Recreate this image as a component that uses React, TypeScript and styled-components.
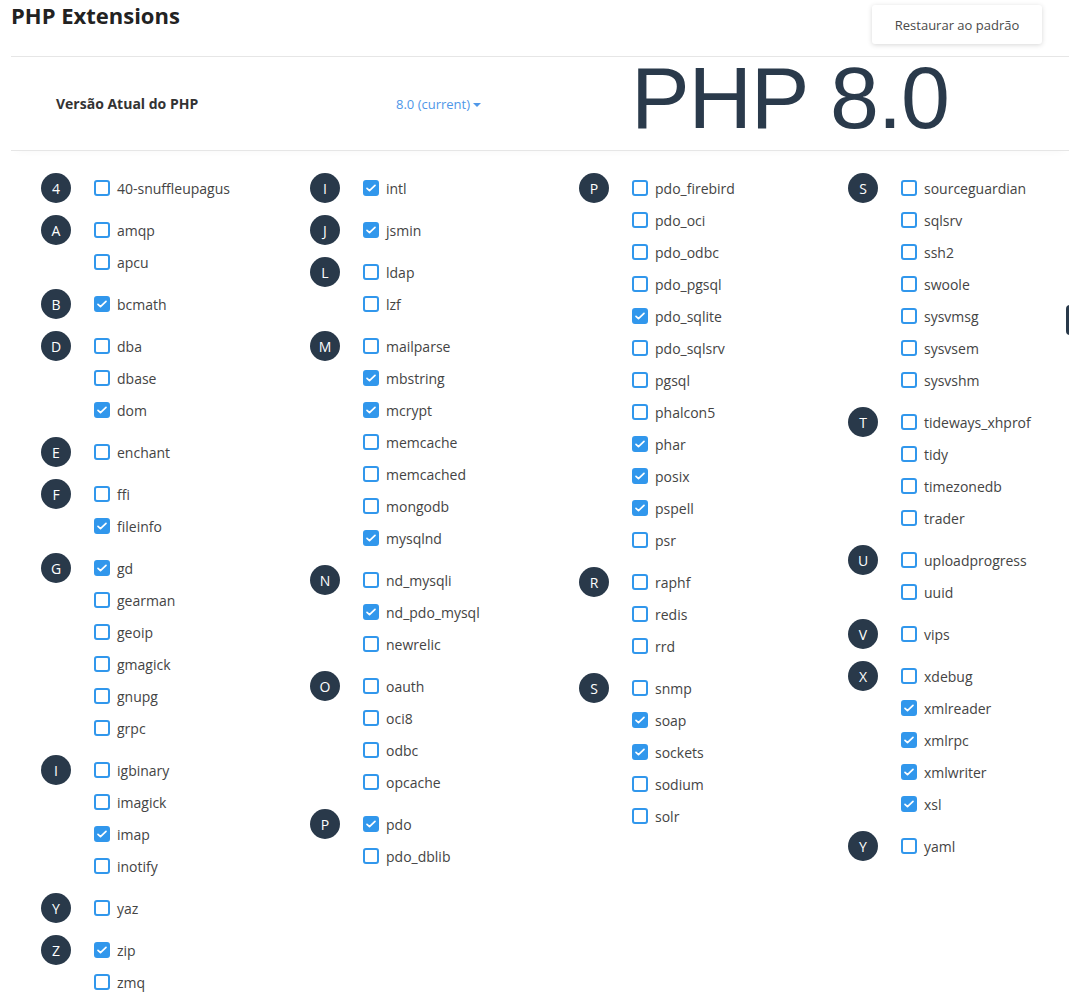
import styled, { createGlobalStyle } from "styled-components";

type Group = { letter: string; items: [string, boolean][] };

const columns: Group[][] = [
  [
    { letter: "4", items: [["40-snuffleupagus", false]] },
    { letter: "A", items: [["amqp", false], ["apcu", false]] },
    { letter: "B", items: [["bcmath", true]] },
    { letter: "D", items: [["dba", false], ["dbase", false], ["dom", true]] },
    { letter: "E", items: [["enchant", false]] },
    { letter: "F", items: [["ffi", false], ["fileinfo", true]] },
    {
      letter: "G",
      items: [["gd", true], ["gearman", false], ["geoip", false], ["gmagick", false], ["gnupg", false], ["grpc", false]],
    },
    { letter: "I", items: [["igbinary", false], ["imagick", false], ["imap", true], ["inotify", false]] },
    { letter: "Y", items: [["yaz", false]] },
    { letter: "Z", items: [["zip", true], ["zmq", false]] },
  ],
  [
    { letter: "I", items: [["intl", true]] },
    { letter: "J", items: [["jsmin", true]] },
    { letter: "L", items: [["ldap", false], ["lzf", false]] },
    {
      letter: "M",
      items: [
        ["mailparse", false],
        ["mbstring", true],
        ["mcrypt", true],
        ["memcache", false],
        ["memcached", false],
        ["mongodb", false],
        ["mysqlnd", true],
      ],
    },
    { letter: "N", items: [["nd_mysqli", false], ["nd_pdo_mysql", true], ["newrelic", false]] },
    { letter: "O", items: [["oauth", false], ["oci8", false], ["odbc", false], ["opcache", false]] },
    { letter: "P", items: [["pdo", true], ["pdo_dblib", false]] },
  ],
  [
    {
      letter: "P",
      items: [
        ["pdo_firebird", false],
        ["pdo_oci", false],
        ["pdo_odbc", false],
        ["pdo_pgsql", false],
        ["pdo_sqlite", true],
        ["pdo_sqlsrv", false],
        ["pgsql", false],
        ["phalcon5", false],
        ["phar", true],
        ["posix", true],
        ["pspell", true],
        ["psr", false],
      ],
    },
    { letter: "R", items: [["raphf", false], ["redis", false], ["rrd", false]] },
    {
      letter: "S",
      items: [["snmp", false], ["soap", true], ["sockets", true], ["sodium", false], ["solr", false]],
    },
  ],
  [
    {
      letter: "S",
      items: [
        ["sourceguardian", false],
        ["sqlsrv", false],
        ["ssh2", false],
        ["swoole", false],
        ["sysvmsg", false],
        ["sysvsem", false],
        ["sysvshm", false],
      ],
    },
    { letter: "T", items: [["tideways_xhprof", false], ["tidy", false], ["timezonedb", false], ["trader", false]] },
    { letter: "U", items: [["uploadprogress", false], ["uuid", false]] },
    { letter: "V", items: [["vips", false]] },
    {
      letter: "X",
      items: [["xdebug", false], ["xmlreader", true], ["xmlrpc", true], ["xmlwriter", true], ["xsl", true]],
    },
    { letter: "Y", items: [["yaml", false]] },
  ],
];

const GlobalStyle = createGlobalStyle`
  body {
    margin: 0;
    background: #fff;
    font-family: "Open Sans", "Liberation Sans", sans-serif;
    color: #444;
  }
`;

const Page = styled.div`
  padding-left: 11px;
  width: 1058px;
`;

const Header = styled.div`
  display: flex;
  justify-content: space-between;
  align-items: flex-start;
  height: 56px;
  border-bottom: 1px solid #e6e6e6;
`;

const Title = styled.h1`
  margin: 0;
  font-size: 22px;
  line-height: 30px;
  font-weight: 700;
  color: #222;
`;

const ResetButton = styled.button`
  margin: 5px 27px 0 0;
  width: 170px;
  height: 39px;
  border: none;
  border-radius: 3px;
  background: #fff;
  box-shadow: 0 1px 5px rgba(0, 0, 0, 0.16);
  font-family: "Open Sans", sans-serif;
  font-size: 13px;
  color: #4a4a4a;
  cursor: pointer;
`;

const VersionRow = styled.div`
  display: grid;
  grid-template-columns: 340px 235px auto;
  align-items: center;
  height: 93px;
  padding-left: 45px;
  border-bottom: 1px solid #e6e6e6;
  box-shadow: 0 6px 8px -6px rgba(0, 0, 0, 0.04);
`;

const VersionLabel = styled.div`
  font-size: 14px;
  font-weight: 700;
  color: #333;
`;

const VersionLink = styled.a`
  font-size: 13px;
  color: #4f97e8;
  text-decoration: none;
  cursor: pointer;

  &::after {
    content: "";
    display: inline-block;
    margin-left: 3px;
    vertical-align: 2px;
    border-left: 4px solid transparent;
    border-right: 4px solid transparent;
    border-top: 4px solid #4f97e8;
  }
`;

const BigVersion = styled.div`
  font-family: "Liberation Sans", Arial, sans-serif;
  font-size: 88px;
  letter-spacing: -1.2px;
  line-height: 1;
  color: #2a3a4b;
  margin-top: -11px;
`;

const Grid = styled.div`
  display: grid;
  grid-template-columns: repeat(4, 269px);
  align-items: start;
  padding: 21px 0 0 30px;
`;

const Column = styled.div`
  display: flex;
  flex-direction: column;
  gap: 10px;
`;

const GroupRow = styled.div`
  display: flex;
  align-items: flex-start;
`;

const Badge = styled.div`
  flex: none;
  width: 30px;
  height: 30px;
  margin-top: 1px;
  margin-right: 23px;
  border-radius: 50%;
  background: #29394a;
  color: #fff;
  font-size: 14px;
  font-weight: 400;
  display: flex;
  align-items: center;
  justify-content: center;
`;

const Items = styled.div`
  display: flex;
  flex-direction: column;
`;

const Item = styled.label`
  display: flex;
  align-items: center;
  height: 32px;
  font-size: 14px;
  color: #444;
  cursor: pointer;
`;

const Box = styled.span<{ $checked: boolean }>`
  flex: none;
  box-sizing: border-box;
  width: 16px;
  height: 16px;
  margin-right: 7px;
  border-radius: 3px;
  border: 2px solid #3197ec;
  background: ${(p) => (p.$checked ? "#3197ec" : "#fff")};
  display: flex;
  align-items: center;
  justify-content: center;
`;

const SideTab = styled.div`
  position: fixed;
  top: 305px;
  right: -8px;
  width: 11px;
  height: 30px;
  border-radius: 4px;
  background: #29394a;
`;

const Check = () => (
  <svg width="12" height="12" viewBox="0 0 12 12">
    <path d="M2 6.3l2.5 2.4L10 3.3" fill="none" stroke="#fff" strokeWidth="1.7" strokeLinecap="round" strokeLinejoin="round" />
  </svg>
);

export default function App() {
  return (
    <>
      <GlobalStyle />
      <Page>
        <Header>
          <Title>PHP Extensions</Title>
          <ResetButton>Restaurar ao padrão</ResetButton>
        </Header>
        <VersionRow>
          <VersionLabel>Versão Atual do PHP</VersionLabel>
          <VersionLink>8.0 (current)</VersionLink>
          <BigVersion>PHP 8.0</BigVersion>
        </VersionRow>
        <Grid>
          {columns.map((col, ci) => (
            <Column key={ci}>
              {col.map((g, gi) => (
                <GroupRow key={gi}>
                  <Badge>{g.letter}</Badge>
                  <Items>
                    {g.items.map(([name, on]) => (
                      <Item key={name}>
                        <Box $checked={on}>{on && <Check />}</Box>
                        {name}
                      </Item>
                    ))}
                  </Items>
                </GroupRow>
              ))}
            </Column>
          ))}
        </Grid>
      </Page>
      <SideTab />
    </>
  );
}
